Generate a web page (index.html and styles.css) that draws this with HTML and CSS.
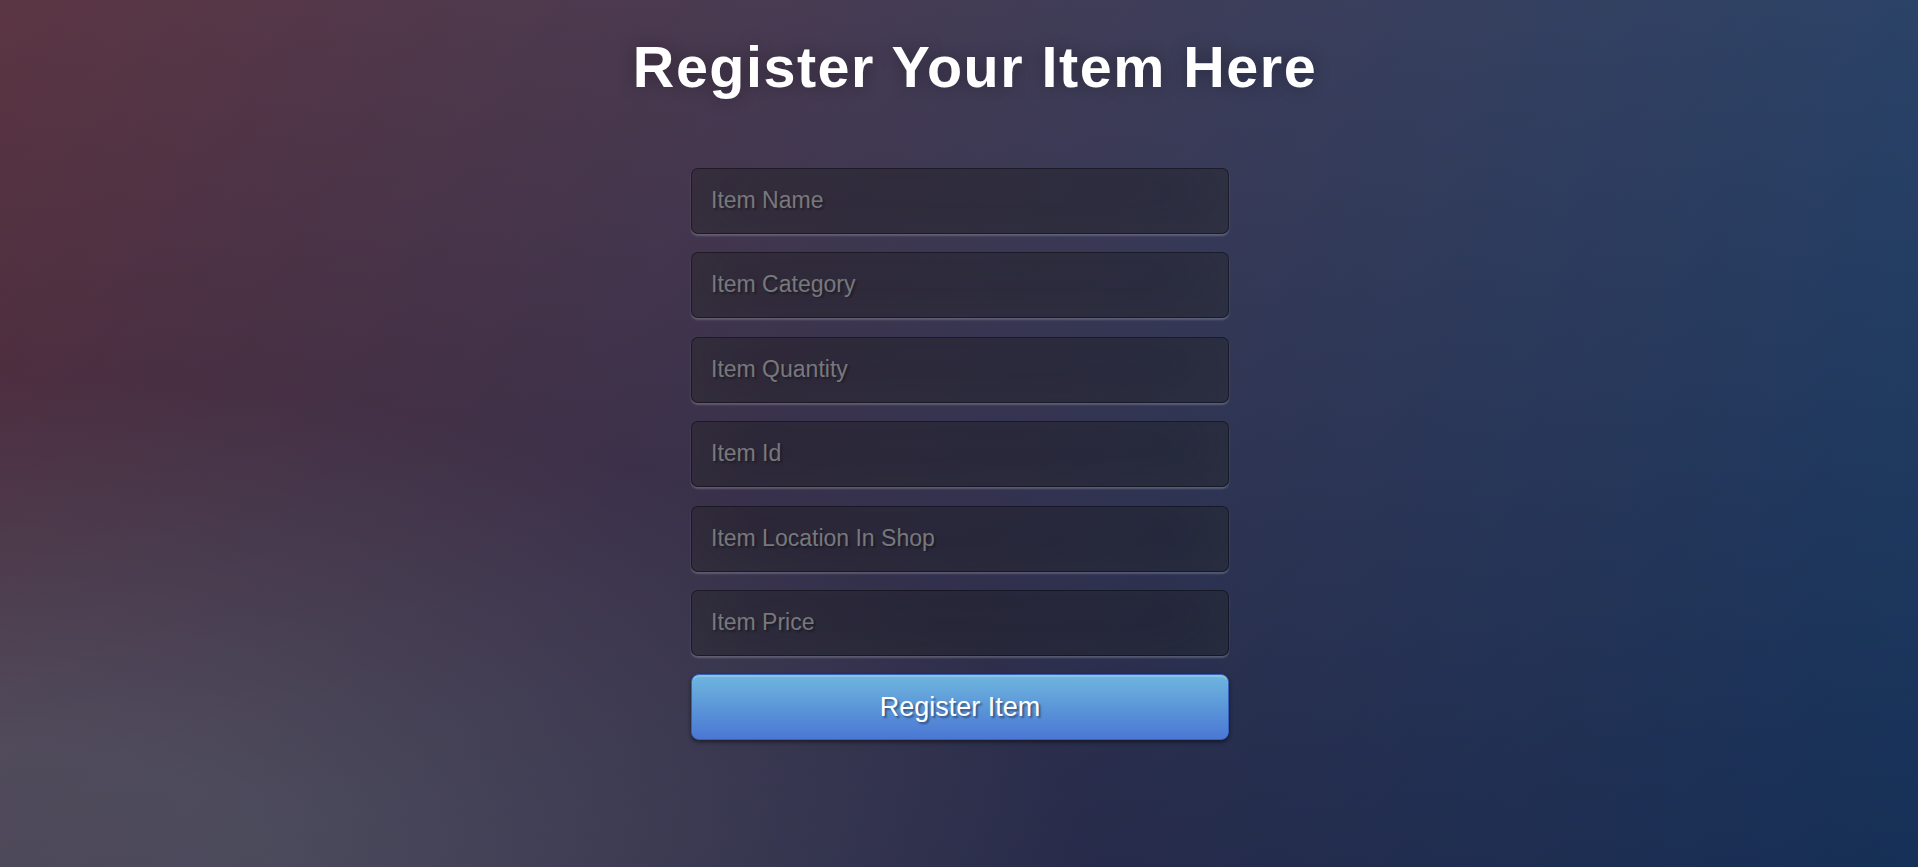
FILE: index.html
```html
<!DOCTYPE html>
<html lang="en">
<head>
<meta charset="utf-8">
<title>Register Your Item Here</title>
<link rel="stylesheet" href="styles.css">
</head>
<body>
<div class="page">
  <h1 class="title">Register Your Item Here</h1>
  <form class="form">
    <input class="field" type="text" placeholder="Item Name">
    <input class="field" type="text" placeholder="Item Category">
    <input class="field" type="text" placeholder="Item Quantity">
    <input class="field" type="text" placeholder="Item Id">
    <input class="field" type="text" placeholder="Item Location In Shop">
    <input class="field" type="text" placeholder="Item Price">
    <button class="btn" type="button">Register Item</button>
  </form>
</div>
</body>
</html>
```

FILE: styles.css
```css
html, body {
  margin: 0;
  padding: 0;
  height: 100%;
}

body {
  font-family: "Liberation Sans", Arial, sans-serif;
  overflow: hidden;
}

.page {
  height: 100vh;
  box-sizing: border-box;
  padding-top: 35px;
  background: #092756;
  background:
    radial-gradient(ellipse farthest-corner at 0% 100%, rgba(104,128,138,.4) 10%, rgba(138,114,76,0) 40%),
    linear-gradient(to bottom, rgba(57,173,219,.25) 0%, rgba(42,60,87,.4) 100%),
    linear-gradient(135deg, #670d10 0%, #092756 100%);
}

.title {
  margin: 0;
  padding-left: 32px;
  text-align: center;
  color: #fff;
  font-size: 57.5px;
  line-height: 64px;
  font-weight: bold;
  letter-spacing: 1.5px;
  text-shadow: 0 0 17px rgba(0,0,0,0.3);
}

.form {
  width: 538px;
  margin: 69px auto 0;
  padding-left: 2px;
  display: flex;
  flex-direction: column;
  gap: 18.4px;
}

.field {
  display: block;
  box-sizing: border-box;
  width: 100%;
  height: 66px;
  margin: 0;
  padding: 0 19px 1px;
  font-family: "Liberation Sans", Arial, sans-serif;
  font-size: 23px;
  color: #fff;
  background: rgba(0,0,0,0.3);
  border: 1.75px solid rgba(0,0,0,0.3);
  border-radius: 7px;
  outline: none;
  text-shadow: 2px 2px 2px rgba(0,0,0,0.3);
  box-shadow: inset 0 -9px 79px rgba(100,100,100,0.2), 0 2px 2px rgba(255,255,255,0.2);
}

.field::placeholder {
  color: #78787c;
  opacity: 1;
}

.btn {
  display: block;
  box-sizing: border-box;
  width: 100%;
  height: 66px;
  margin: 0;
  padding: 0;
  font-family: "Liberation Sans", Arial, sans-serif;
  font-size: 27px;
  color: #fff;
  text-align: center;
  background-color: #4a77d4;
  background-image: linear-gradient(to bottom, #6eb6de, #4a77d4);
  border: 1.75px solid #3762bc;
  border-radius: 8px;
  text-shadow: 2px 2px 2px rgba(0,0,0,0.4);
  box-shadow: inset 0 2px 0 rgba(255,255,255,0.2), 0 2px 4px rgba(0,0,0,0.5);
  cursor: pointer;
}
```
